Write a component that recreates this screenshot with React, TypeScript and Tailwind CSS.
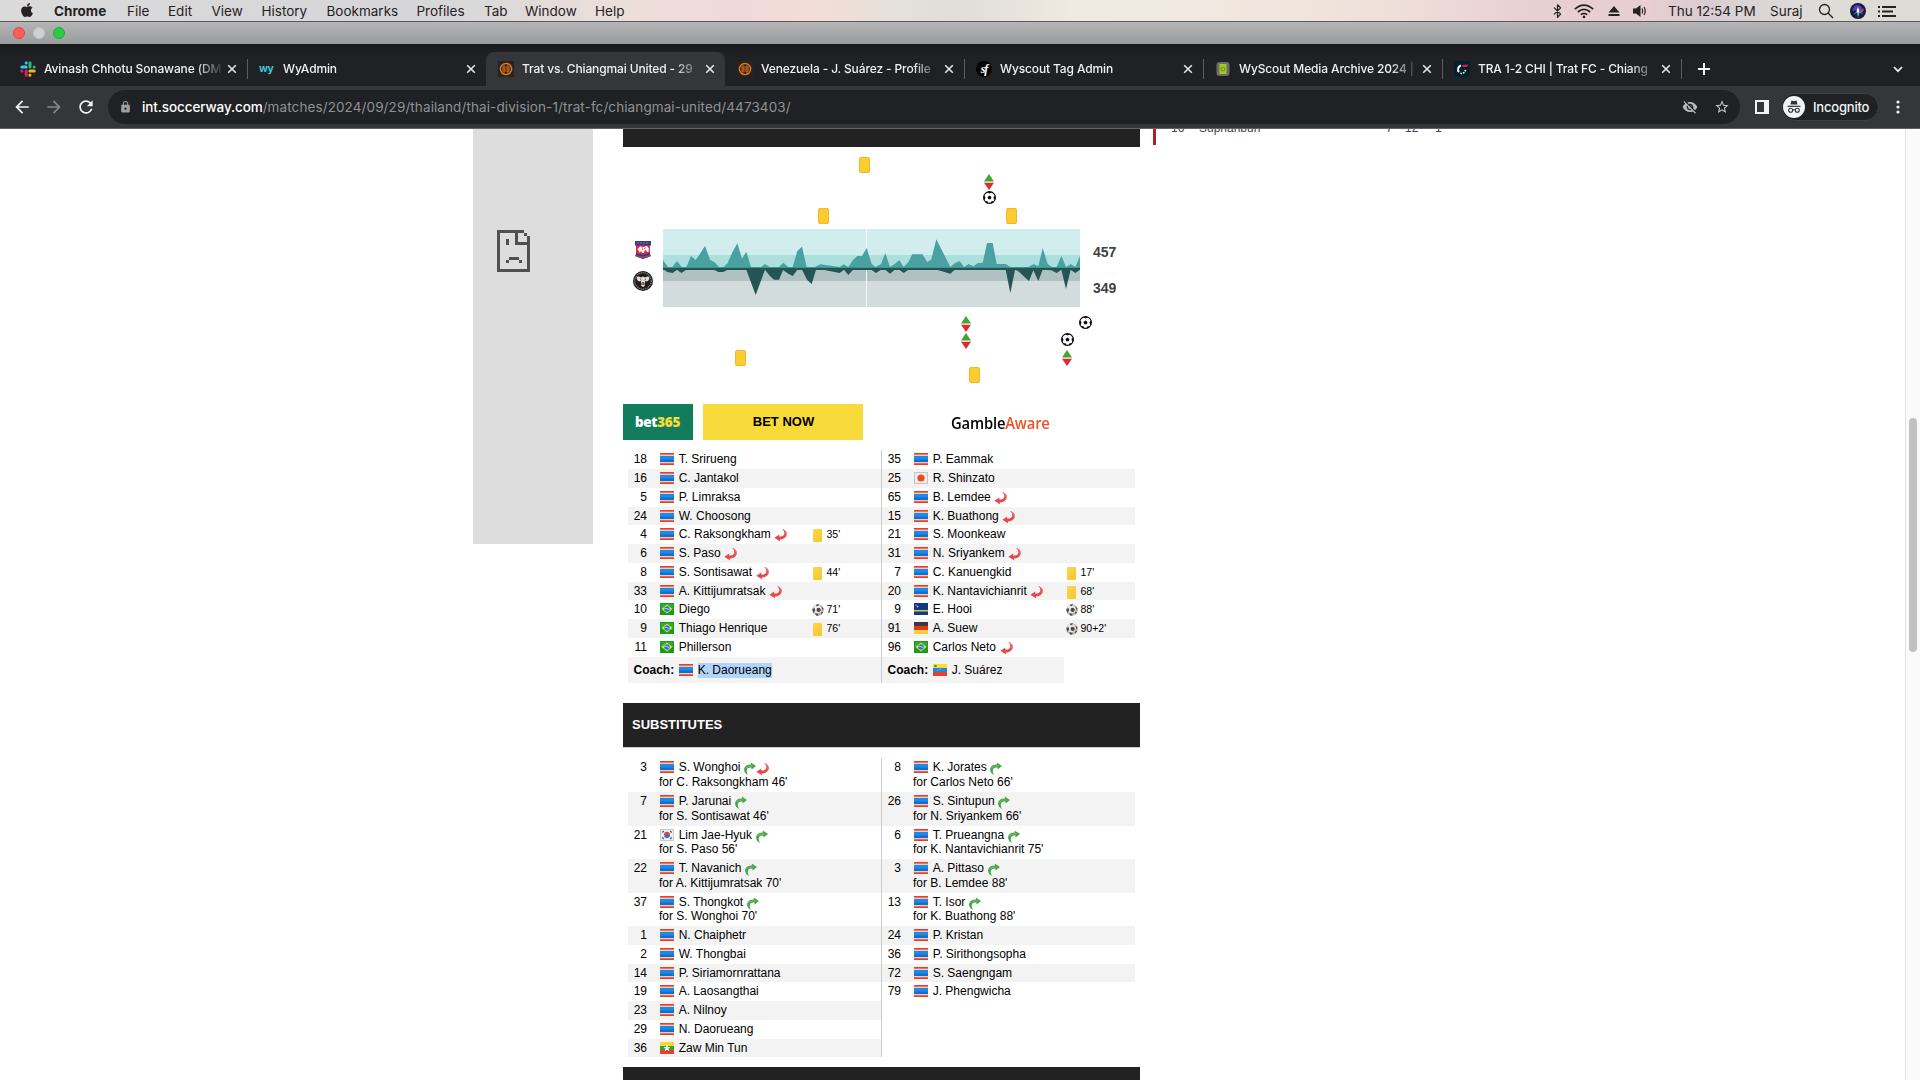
import React from "react";
import { Bluetooth } from "lucide-react";
import { MdVisibilityOff, MdStarBorder, MdLock, MdRefresh, MdArrowBack, MdArrowForward } from "react-icons/md";
import { FaApple } from "react-icons/fa";

type FlagCode = "th" | "jp" | "br" | "cw" | "de" | "ve" | "kr" | "mm";
type EventKind = "card" | "goal";

interface Player {
  n: number;
  name: string;
  flag?: FlagCode;
  out?: boolean;
  in?: boolean;
  event?: EventKind;
  minute?: string;
  sub?: string;
}

const homeLineup: Player[] = [
  { n: 18, name: "T. Srirueng" },
  { n: 16, name: "C. Jantakol" },
  { n: 5, name: "P. Limraksa" },
  { n: 24, name: "W. Choosong" },
  { n: 4, name: "C. Raksongkham", out: true, event: "card", minute: "35'" },
  { n: 6, name: "S. Paso", out: true },
  { n: 8, name: "S. Sontisawat", out: true, event: "card", minute: "44'" },
  { n: 33, name: "A. Kittijumratsak", out: true },
  { n: 10, name: "Diego", flag: "br", event: "goal", minute: "71'" },
  { n: 9, name: "Thiago Henrique", flag: "br", event: "card", minute: "76'" },
  { n: 11, name: "Phillerson", flag: "br" },
];

const awayLineup: Player[] = [
  { n: 35, name: "P. Eammak" },
  { n: 25, name: "R. Shinzato", flag: "jp" },
  { n: 65, name: "B. Lemdee", out: true },
  { n: 15, name: "K. Buathong", out: true },
  { n: 21, name: "S. Moonkeaw" },
  { n: 31, name: "N. Sriyankem", out: true },
  { n: 7, name: "C. Kanuengkid", event: "card", minute: "17'" },
  { n: 20, name: "K. Nantavichianrit", out: true, event: "card", minute: "68'" },
  { n: 9, name: "E. Hooi", flag: "cw", event: "goal", minute: "88'" },
  { n: 91, name: "A. Suew", flag: "de", event: "goal", minute: "90+2'" },
  { n: 96, name: "Carlos Neto", flag: "br", out: true },
];

const homeSubs: Player[] = [
  { n: 3, name: "S. Wonghoi", in: true, out: true, sub: "for C. Raksongkham 46'" },
  { n: 7, name: "P. Jarunai", in: true, sub: "for S. Sontisawat 46'" },
  { n: 21, name: "Lim Jae-Hyuk", flag: "kr", in: true, sub: "for S. Paso 56'" },
  { n: 22, name: "T. Navanich", in: true, sub: "for A. Kittijumratsak 70'" },
  { n: 37, name: "S. Thongkot", in: true, sub: "for S. Wonghoi 70'" },
  { n: 1, name: "N. Chaiphetr" },
  { n: 2, name: "W. Thongbai" },
  { n: 14, name: "P. Siriamornrattana" },
  { n: 19, name: "A. Laosangthai" },
  { n: 23, name: "A. Nilnoy" },
  { n: 29, name: "N. Daorueang" },
  { n: 36, name: "Zaw Min Tun", flag: "mm" },
];

const awaySubs: Player[] = [
  { n: 8, name: "K. Jorates", in: true, sub: "for Carlos Neto 66'" },
  { n: 26, name: "S. Sintupun", in: true, sub: "for N. Sriyankem 66'" },
  { n: 6, name: "T. Prueangna", in: true, sub: "for K. Nantavichianrit 75'" },
  { n: 3, name: "A. Pittaso", in: true, sub: "for B. Lemdee 88'" },
  { n: 13, name: "T. Isor", in: true, sub: "for K. Buathong 88'" },
  { n: 24, name: "P. Kristan" },
  { n: 36, name: "P. Sirithongsopha" },
  { n: 72, name: "S. Saengngam" },
  { n: 79, name: "J. Phengwicha" },
];

const lineupHeights = [19, 19, 19, 18, 19, 19, 19, 18, 19, 19, 19];
const subHeights = [34, 34, 33, 34, 33, 19, 19, 18, 19, 19, 19, 18];

function Flag({ code = "th" }: { code?: FlagCode }) {
  return (
    <svg className="block h-3 w-3.5 shrink-0" viewBox="0 0 14 12">
      {code === "th" && (
        <>
          <rect width="14" height="12" fill="#e53f28" />
          <rect y="1" width="14" height="1" fill="#f2745a" />
          <rect y="2" width="14" height="8" fill="#e2cfc9" />
          <rect y="3" width="14" height="6" fill="#1f8ae6" />
          <rect y="6.500" width="14" height="2.500" fill="#1170cf" />
          <rect y="10" width="14" height="1" fill="#f2674c" />
        </>
      )}
      {code === "jp" && (
        <>
          <rect x=".5" y=".5" width="13" height="11" fill="#ececec" stroke="#c6c6c6" />
          <circle cx="7" cy="6" r="3.600" fill="#f04a25" />
        </>
      )}
      {code === "br" && (
        <>
          <rect width="14" height="12" fill="#1d9a1d" />
          <rect x="1" y="1" width="12" height="5" fill="#2fac2a" />
          <path d="M7 1.500 12.500 6 7 10.500 1.500 6Z" fill="#d9e04a" />
          <circle cx="7" cy="6" r="2.700" fill="#2277d8" />
          <path d="M4.600 5.300q2.500-.4 4.700 1.500" stroke="#cfe6fa" strokeWidth=".8" fill="none" />
        </>
      )}
      {code === "cw" && (
        <>
          <rect width="14" height="12" fill="#12397f" />
          <rect y="7" width="14" height="1.500" fill="#dbc73c" />
          <circle cx="2" cy="2" r=".6" fill="#fff" />
          <circle cx="3.600" cy="3.600" r=".8" fill="#d5dff0" />
        </>
      )}
      {code === "de" && (
        <>
          <rect width="14" height="4" fill="#3a3a3a" />
          <rect y="4" width="14" height="4" fill="#e8321d" />
          <rect y="8" width="14" height="4" fill="#f6cf3a" />
        </>
      )}
      {code === "ve" && (
        <>
          <rect width="14" height="4" fill="#f7de37" />
          <rect y="4" width="14" height="4" fill="#2585dc" />
          <rect y="8" width="14" height="4" fill="#ea4029" />
          <circle cx="2.500" cy="2" r="1.300" fill="#5f8a3c" />
          <path d="M4.500 6.500q2.500-2 5 0" stroke="#a9cdf0" strokeWidth=".7" strokeDasharray="1 .6" fill="none" />
        </>
      )}
      {code === "kr" && (
        <>
          <rect x=".5" y=".5" width="13" height="11" fill="#f0f0f0" stroke="#cbcbcb" />
          <path d="M4 6a3 3 0 0 1 6-.6L7 6.500Z" fill="#e5432c" />
          <path d="M10 5.600a3 3 0 0 1-6 .8L7 5.500Z" fill="#2a6fd0" />
          <path d="M2.300 3.500 3.800 2M10.200 2l1.500 1.500M2.300 8.500 3.800 10M10.200 10l1.500-1.500" stroke="#555" strokeWidth="1.300" />
        </>
      )}
      {code === "mm" && (
        <>
          <rect width="14" height="4" fill="#f7d734" />
          <rect y="4" width="14" height="4" fill="#36a13a" />
          <rect y="8" width="14" height="4" fill="#ea4029" />
          <path d="M7 2.500 8 5h2.500l-2 1.600.8 2.600L7 7.700 4.700 9.200l.8-2.600-2-1.600H6Z" fill="#fff" />
        </>
      )}
    </svg>
  );
}

function OutArrow() {
  return (
    <svg className="block h-3.5 w-3.5 shrink-0" viewBox="0 0 14 14">
      <path d="M8 1C12 1.500 13.600 5 12.500 7.700 11.400 10.200 8.500 11.600 5.700 11.500L6.200 13.500.4 9.700 5.300 6.500 5.200 8.600C7.800 8.700 9.600 8.100 10.200 6.200 10.800 4.300 9.800 2.300 8 1Z" fill="#e5494b" />
      <path d="M9.200 1.800C12 3 13 5.500 11.700 7.700" stroke="#f0908f" strokeWidth=".8" fill="none" />
    </svg>
  );
}

function InArrow() {
  return (
    <svg className="block h-3.5 w-3 shrink-0" viewBox="0 0 12 14">
      <path d="M4.300 13.300C.2 11.400-.9 7.500.9 5 2.200 3 4.400 2.300 7 2.500L6.800.5 12 4 7.600 7.600 7.400 5.600C5 5.300 3.300 6 2.900 7.900c-.4 1.900.2 3.600 1.400 5.400Z" fill="#46a54c" />
      <path d="M1.800 6.200C3 4.300 5 3.800 8.500 4" stroke="#7fc268" strokeWidth=".9" fill="none" />
    </svg>
  );
}

function SmallBall() {
  return (
    <svg className="block size-3" viewBox="0 0 12 12">
      <circle cx="6" cy="6" r="5.800" fill="#b4b4b4" />
      <circle cx="5.300" cy="5" r="4.300" fill="#eaeaea" />
      <path d="M4.800 4.300 7.600 3.800 9 6 7.200 8.300 4.700 7.200ZM.3 5l2.200-1L3.200 6.500 1.500 9ZM4 .6 7 .3 6.200 2 4.500 2.300ZM9.300 2.500l2.200 2L10.800 6.500ZM3.300 9.300 6 9.700 6.500 11.800 4.200 11.500ZM9 8.500l2.300-.8-1.800 3Z" fill="#4a4a4a" />
    </svg>
  );
}

function MatchBall() {
  return (
    <svg className="block size-[13px]" viewBox="0 0 13 13">
      <circle cx="6.500" cy="6.500" r="5.900" fill="#fff" stroke="#0c0c0c" strokeWidth="1.100" />
      <path d="M6.500 4.500 8.500 5.900 7.700 8.200H5.300L4.500 5.900ZM3.800 1 6.500 2.500 9.200 1ZM.6 4.200 2.500 5.900 2 8.200.8 9.200ZM12.400 4.200 10.500 5.900l.5 2.300 1.200 1ZM2.200 10l2.700.6.400 1.900L3 12ZM10.800 10l-2.700.6-.4 1.900 2.300-.5Z" fill="#0c0c0c" />
    </svg>
  );
}

function SwapMark() {
  return (
    <svg className="block h-4 w-2.5" viewBox="0 0 10 16">
      <path d="M5 0 10 7.500H0Z" fill="#43a52f" />
      <path d="M0 8.700H10L5 16Z" fill="#de2a30" />
    </svg>
  );
}

function PlayerRow({ p, h, striped }: { p: Player; h: number; striped: boolean }) {
  return (
    <div className={"flex w-[253px] " + (striped ? "bg-[#f3f3f3]" : "bg-white")} style={{ height: h }}>
      <div className="w-[19px] shrink-0 pt-px text-right leading-4">{p.n}</div>
      <div className="w-[163px] shrink-0 pl-3">
        <div className="flex h-[18px] items-center pl-px">
          <Flag code={p.flag} />
          <span className="ml-[4.700px] whitespace-nowrap leading-4">{p.name}</span>
          {p.in && (
            <span className="ml-[3.500px] pt-[3px]">
              <InArrow />
            </span>
          )}
          {p.out && (
            <span className={p.in ? "pt-1" : "ml-[3.500px] pt-0.5"}>
              <OutArrow />
            </span>
          )}
        </div>
        {p.sub && (
          <div className={"-mt-0.5 whitespace-nowrap " + (h === 34 ? "leading-[17px]" : "leading-[15px]")}>{p.sub}</div>
        )}
      </div>
      {p.event && (
        <div className="flex h-[18px] items-center text-[10.500px]">
          <div className="flex w-[15px] justify-center pt-0.5">
            {p.event === "card" ? (
              <div className="h-[13px] w-[9px] rounded-[1px] bg-[linear-gradient(135deg,#fdd54e,#f9c62a)]" />
            ) : (
              <SmallBall />
            )}
          </div>
          <span className="ml-[1.500px] leading-4">{p.minute}</span>
        </div>
      )}
    </div>
  );
}

function PlayerColumn({ rows, heights, children }: { rows: Player[]; heights: number[]; children?: React.ReactNode }) {
  return (
    <div className="w-[253px]">
      {rows.map((p, i) => (
        <PlayerRow key={i} p={p} h={heights[i]} striped={i % 2 === 1} />
      ))}
      {children}
    </div>
  );
}

const upper =
  "0,117 0,94 15,114 28,114 42,96 56,114 70,114 84,81 98,93 112,73 126,51 141,92 155,100 168,114 182,114 194,102 209,68 223,43 237,89 250,68 264,114 294,114 306,105 320,114 348,114 361,101 376,114 389,114 403,66 417,53 431,114 455,114 472,106 530,114 542,106 556,114 570,93 583,81 597,81 611,57 626,105 638,114 654,105 667,72 681,114 695,105 709,93 722,114 736,99 748,76 778,76 793,99 805,91 820,31 862,114 876,102 890,96 903,114 917,105 931,112 945,102 959,101 972,42 989,42 1001,105 1028,105 1042,114 1096,114 1112,105 1126,112 1139,57 1154,105 1167,114 1181,114 1195,81 1209,114 1223,105 1237,114 1251,81 1251,117";
const lower =
  "0,120 13,129 29,132 42,122 55,132 70,122 153,122 166,129 181,129 194,122 250,122 278,198 306,122 320,140 333,152 348,152 360,123 376,134 389,141 403,122 417,122 432,152 446,165 459,122 480,122 530,132 543,122 556,138 570,122 625,122 639,132 654,122 667,122 681,134 695,122 709,122 722,132 736,122 822,122 862,134 875,122 1028,122 1042,192 1056,122 1065,126 1098,156 1111,124 1126,156 1139,122 1165,124 1181,132 1195,122 1209,180 1223,122 1237,132 1251,122 1251,117 0,117";

function Momentum() {
  return (
    <svg className="block h-[78px] w-[417px]" viewBox="0 0 1251 234">
      <rect width="1251" height="78" fill="#d1eded" />
      <rect y="78" width="1251" height="42" fill="#abe0df" />
      <rect y="120" width="1251" height="36" fill="#afc1c1" />
      <rect y="156" width="1251" height="78" fill="#d3dcdd" />
      <rect x="609" width="3" height="234" fill="#f4fafa" />
      <polygon points={upper} fill="#49a2a0" />
      <polygon points={lower} fill="#225553" />
      <rect y="116.500" width="1251" height="6.500" fill="#225553" />
    </svg>
  );
}

const marks: { kind: "card" | "swap" | "ball"; pos: string }[] = [
  { kind: "card", pos: "left-[236px] top-[10px]" },
  { kind: "card", pos: "left-[195px] top-[61px]" },
  { kind: "card", pos: "left-[383px] top-[61px]" },
  { kind: "card", pos: "left-[112px] top-[203px]" },
  { kind: "card", pos: "left-[346px] top-[220px]" },
  { kind: "swap", pos: "left-[361px] top-[27px]" },
  { kind: "swap", pos: "left-[338px] top-[169px]" },
  { kind: "swap", pos: "left-[338px] top-[186px]" },
  { kind: "swap", pos: "left-[439px] top-[203px]" },
  { kind: "ball", pos: "left-[360px] top-[44px]" },
  { kind: "ball", pos: "left-[456px] top-[169px]" },
  { kind: "ball", pos: "left-[438px] top-[186px]" },
];

function MatchChart() {
  return (
    <div className="relative flex h-[257px] pt-[82px]">
      <div className="flex w-10 shrink-0 flex-col items-center pt-3">
        <svg className="block h-[18px] w-4" viewBox="0 0 16 18">
          <path d="M0 0H16V4L15 5V13L16 15 11 17 8 18 5 17 0 15 1 13V5L0 4Z" fill="#34407f" />
          <path d="M1 4.500H15V12L8 13.500 1 12Z" fill="#ee2440" />
          <path d="M2.500 8 5 5.500 8.500 6 12 5 14 7.500 13.500 11 12 11 11 9 9.500 9.500 9 12H7L6.500 10 4.500 11.500 3.500 9.500Z" fill="#fff" />
          <path d="M7 6 8 9M11 6.500 9 8" stroke="#ee2440" strokeWidth=".7" />
          <path d="M2 2H14" stroke="#a6607f" strokeDasharray="2 1" />
          <path d="M1 14.800Q8 17.500 15 14.800" stroke="#a83a68" strokeWidth="1.500" fill="none" />
        </svg>
        <svg className="mt-3 block size-5" viewBox="0 0 20 20">
          <circle cx="10" cy="10" r="10" fill="#1d1b1b" />
          <circle cx="10" cy="10" r="8.200" fill="none" stroke="#8b8b8b" strokeWidth="1.200" strokeDasharray="1.200 .8" />
          <circle cx="10" cy="10" r="6.700" fill="#2a1614" />
          <path d="M3.700 6Q5.500 4.800 8 6.500L10 5.500 12 6.500Q14.500 4.800 16.300 6 16.500 9.500 14 10.500L12.200 10 11.500 13 11.800 15 10 16 8.200 15 8.500 13 7.800 10 6 10.500Q3.500 9.500 3.700 6Z" fill="#dedede" />
          <path d="M7.300 7.500 8.200 9.500M12.700 7.500 11.800 9.500M9.500 11v3M10.500 11v3" stroke="#333" strokeWidth=".7" />
        </svg>
      </div>
      <Momentum />
      <div className="flex flex-col pl-[13px] pt-[13px] text-sm font-bold text-[#414141]">
        <span className="leading-5">457</span>
        <span className="mt-4 leading-5">349</span>
      </div>
      {marks.map((m, i) => (
        <div key={i} className={"absolute " + m.pos}>
          {m.kind === "card" && <div className="h-4 w-[11px] rounded-[2px] border border-[#f9b32f] bg-[#fbce2f]" />}
          {m.kind === "swap" && <SwapMark />}
          {m.kind === "ball" && <MatchBall />}
        </div>
      ))}
    </div>
  );
}

const menus = [
  { t: "File", w: "w-[41px]" },
  { t: "Edit", w: "w-[43.500px]" },
  { t: "View", w: "w-[50px]" },
  { t: "History", w: "w-[65px]" },
  { t: "Bookmarks", w: "w-[90px]" },
  { t: "Profiles", w: "w-[67.500px]" },
  { t: "Tab", w: "w-[41px]" },
  { t: "Window", w: "w-[70px]" },
  { t: "Help", w: "w-[40px]" },
];

function MenuBar() {
  return (
    <div className="flex h-[22px] shrink-0 items-center border-b border-[#5f5a5a] bg-[linear-gradient(90deg,#dadada_0%,#d6d6d8_22%,#dedada_27%,#ecdfda_32%,#f0d9d9_39%,#f4ddd6_42%,#e4e0da_47%,#e0ded7_50%,#efeae2_56%,#f1e9e1_62%,#efe0da_72%,#e8cfd2_80%,#e6ced1_86%,#d8cdd2_89%,#dedcd8_94%,#dcdcd4_100%)] pt-px text-[13.500px] text-[#262223]">
      <FaApple className="mb-0.5 ml-[19px] size-4" />
      <span className="ml-[19px] w-[73px] font-bold">Chrome</span>
      {menus.map((m) => (
        <span key={m.t} className={"shrink-0 " + m.w}>
          {m.t}
        </span>
      ))}
      <div className="ml-auto flex items-center whitespace-nowrap">
        <Bluetooth className="h-4 w-[15px]" strokeWidth={2} />
        <svg className="ml-[9px] h-[15px] w-5" viewBox="0 0 20 15" fill="none" stroke="#262223" strokeWidth="1.700">
          <path d="M.8 5.200Q10-3 19.200 5.200M3.800 8Q10 2.600 16.200 8M6.700 10.700Q10 8 13.300 10.700" />
          <circle cx="10" cy="12.900" r="1.300" fill="#262223" stroke="none" />
        </svg>
        <svg className="ml-3.5 h-3 w-3" viewBox="0 0 12 12" fill="#262223">
          <path d="M6 1 11.500 7.500H.5ZM.5 9H11.500V11H.5Z" />
        </svg>
        <svg className="ml-3 h-3.5 w-4" viewBox="0 0 16 14" fill="#262223">
          <path d="M1 4.500H4L8.500 1V13L4 9.500H1Z" />
          <path d="M10 4.500Q11.500 7 10 9.500M12 3Q14.500 7 12 11" fill="none" stroke="#262223" strokeWidth="1.200" />
        </svg>
        <span className="ml-5 w-[102px]">Thu 12:54 PM</span>
        <span className="w-[48px]">Suraj</span>
        <svg className="h-4 w-4" viewBox="0 0 16 16" fill="none" stroke="#262223" strokeWidth="1.300">
          <circle cx="6.500" cy="6.500" r="5" />
          <path d="M10.300 10.300 15 15" />
        </svg>
        <svg className="ml-4 size-4" viewBox="0 0 16 16">
          <circle cx="8" cy="8" r="8" fill="#1b1a3c" />
          <path d="M2 8Q4 1 8 2T14 8L8 7Z" fill="#5a3fc0" />
          <path d="M8 7 3 12 7 9.500 8 15 9.500 9.500 13.500 11.500Z" fill="#4cc5da" />
          <path d="M8 4 9.500 8 8 10 6.500 8Z" fill="#fff" />
          <path d="M9 8 14 6 12 10Z" fill="#d43a86" />
        </svg>
        <svg className="ml-3 mr-6 h-[11px] w-[18px]" viewBox="0 0 18 11" fill="#262223">
          <path d="M0 0h2v2H0ZM4 0h14v2H4ZM0 4.500h2v2H0ZM4 4.500h11v2H4ZM0 9h2v2H0ZM4 9h14v2H4Z" />
        </svg>
      </div>
    </div>
  );
}

function SoccerwayIcon() {
  return (
    <svg className="size-4 shrink-0" viewBox="0 0 16 16">
      <rect width="16" height="16" fill="#29231d" />
      <circle cx="8" cy="8" r="5.600" fill="none" stroke="#dd7623" strokeWidth="1.500" />
      <path d="M4 6H12M4 8H12M4 10H12M6 3.500V12.500M10 3.500V12.500" stroke="#c96a20" strokeWidth="1" />
    </svg>
  );
}

function SlackIcon() {
  return (
    <svg className="size-4 shrink-0" viewBox="0 0 16 16" strokeWidth="3" strokeLinecap="round">
      <path d="M1.800 6H6.200M6.200 1.800V2" stroke="#36c5f0" />
      <path d="M10 1.800V6M14.200 6H14.100" stroke="#2eb67d" />
      <path d="M9.900 10H14.200M9.900 14.200V14.100" stroke="#ecb22e" />
      <path d="M6.200 10V14.200M1.800 10H1.900" stroke="#e01e5a" />
    </svg>
  );
}

const tabs: { title: string; icon: React.ReactNode; active?: boolean; sep?: boolean }[] = [
  { title: "Avinash Chhotu Sonawane (DM", icon: <SlackIcon />, sep: true },
  { title: "WyAdmin", icon: <span className="w-4 text-[10.500px] font-bold tracking-[-0.5px] text-[#3fc6dc]">wy</span> },
  { title: "Trat vs. Chiangmai United - 29", icon: <SoccerwayIcon />, active: true },
  { title: "Venezuela - J. Suárez - Profile", icon: <SoccerwayIcon />, sep: true },
  {
    title: "Wyscout Tag Admin",
    icon: (
      <span className="flex size-4 items-center justify-center rounded-full bg-black font-[Liberation_Serif] text-[12px] font-bold italic leading-none tracking-[-1px] text-white">
        sf
      </span>
    ),
    sep: true,
  },
  {
    title: "WyScout Media Archive 2024 |",
    icon: (
      <svg className="size-4 shrink-0" viewBox="0 0 16 16">
        <rect x="1.500" y="1" width="13" height="14" rx="3" fill="#6b6d6c" />
        <rect x="4.500" y="3" width="7" height="10" fill="#a3c81e" />
        <circle cx="8" cy="8" r="2" fill="none" stroke="#6d8c10" />
      </svg>
    ),
    sep: true,
  },
  {
    title: "TRA 1-2 CHI | Trat FC - Chiang",
    icon: (
      <svg className="size-4 shrink-0" viewBox="0 0 16 16">
        <rect width="16" height="16" rx="3" fill="#04202b" />
        <path d="M7 4.500A4 4 0 0 0 5 11" stroke="#fff" strokeWidth="2" fill="none" />
        <path d="M6.500 12.300A4 4 0 0 0 11.500 8.500" stroke="#fff" strokeWidth="1.500" strokeDasharray="1.500 1" fill="none" />
        <path d="M8 4 14.500 3.500 12.500 6H9Z" fill="#e5194c" />
      </svg>
    ),
    sep: true,
  },
];

function TabStrip() {
  return (
    <div className="flex h-[42px] shrink-0 bg-[linear-gradient(#18191b,#202124_10px)] pl-2 pt-2">
      {tabs.map((t, i) => (
        <div
          key={i}
          className={
            "relative flex h-[34px] w-[239px] shrink-0 items-center pl-3 text-[12px] font-medium tracking-[-0.13px] text-[#f0f1f3] " +
            (t.active ? "rounded-t-lg bg-[#35363a]" : "")
          }
        >
          {t.icon}
          <span className="ml-2 w-[178px] whitespace-nowrap [mask-image:linear-gradient(90deg,#000_152px,transparent_180px)]">
            {t.title}
          </span>
          <svg className="ml-[5px] size-2.5" viewBox="0 0 10 10" stroke="#e4e6e9" strokeWidth="1.600">
            <path d="M1.200 1.200 8.800 8.800M8.800 1.200 1.200 8.800" />
          </svg>
          {t.sep && <div className="absolute right-[-1px] top-[7px] h-5 w-px bg-[#5b5d61]" />}
        </div>
      ))}
      <div className="flex h-[34px] flex-1 items-center justify-between pl-[17px] pr-[17px]">
        <svg className="size-3" viewBox="0 0 12 12" stroke="#f1f3f4" strokeWidth="2">
          <path d="M6 0V12M0 6H12" />
        </svg>
        <svg className="size-2.5" viewBox="0 0 10 10" fill="none" stroke="#e8eaed" strokeWidth="1.800">
          <path d="M1 3 5 7.200 9 3" />
        </svg>
      </div>
    </div>
  );
}

function Toolbar() {
  return (
    <div className="flex h-[43px] shrink-0 items-start border-b border-[#606164] bg-[#35363a] pt-1 text-[13.500px]">
      <div className="flex h-[34px] w-[108px] shrink-0 items-center pl-3">
        <MdArrowBack className="size-5 text-[#f1f3f4]" />
        <MdArrowForward className="ml-3 size-5 text-[#85878b]" />
        <MdRefresh className="ml-3 size-5 text-[#f1f3f4]" />
      </div>
      <div className="flex h-[34px] w-[1632px] shrink-0 items-center rounded-full bg-[#202124] pl-[11px]">
        <MdLock className="h-3.5 w-[13px] text-[#9aa0a6]" />
        <span className="ml-2.5 whitespace-nowrap tracking-[0.1px] text-[#8f9297]">
          <span className="font-medium tracking-[-0.1px] text-white">int.soccerway.com</span>/matches/2024/09/29/thailand/thai-division-1/trat-fc/chiangmai-united/4473403/
        </span>
        <MdVisibilityOff className="ml-auto size-4 text-[#b5b8bc]" />
        <MdStarBorder className="ml-4 mr-2.5 size-4 text-[#c3c6ca]" />
      </div>
      <div className="flex h-[34px] items-center">
        <div className="ml-[15px] h-3.5 w-3.5 border-2 border-r-[5px] border-[#f1f3f4]" />
        <div className="ml-3 flex h-7 w-[98px] items-center rounded-full border border-[#3f4044] bg-[#202124] pl-px text-[13px] font-medium tracking-[-0.2px] text-[#f1f3f4]">
          <svg className="size-[22px] shrink-0" viewBox="0 0 22 22">
            <circle cx="11" cy="11" r="11" fill="#f1f3f4" />
            <path d="M7.500 8.500 8.500 4.500 11 5.200 13.500 4.500 14.500 8.500Z" fill="#303134" />
            <path d="M4.500 10.300H17.500" stroke="#303134" strokeWidth="1.200" />
            <circle cx="7.700" cy="14.300" r="2" fill="none" stroke="#303134" strokeWidth="1.100" />
            <circle cx="14.300" cy="14.300" r="2" fill="none" stroke="#303134" strokeWidth="1.100" />
            <path d="M9.700 14Q11 13.300 12.300 14" fill="none" stroke="#303134" />
          </svg>
          <span className="ml-2 pt-px">Incognito</span>
        </div>
        <svg className="ml-[17px] h-3.5 w-1" viewBox="0 0 4 14" fill="#f1f3f4">
          <circle cx="2" cy="2" r="1.600" />
          <circle cx="2" cy="7" r="1.600" />
          <circle cx="2" cy="12" r="1.600" />
        </svg>
      </div>
    </div>
  );
}

function SadPage() {
  return (
    <svg className="block h-[42px] w-[33px]" viewBox="0 0 11 14" shapeRendering="crispEdges" fill="#505050">
      <path d="M0 0H9V1H0ZM0 1H1V14H0ZM1 13H11V14H1ZM10 2H11V13H10ZM9 1H10V2H9ZM6 1H7V5H6ZM7 4H10V5H7ZM3 3H4V5H3ZM4 9H7.300V10H4ZM3 10H4V11H3ZM7.300 10H8.300V11H7.300Z" />
    </svg>
  );
}

function Coach({ flag, name, selected, narrow }: { flag: FlagCode; name: string; selected?: boolean; narrow?: boolean }) {
  return (
    <div className={"flex h-[26px] items-center bg-[#f3f3f3] pl-[5.500px] " + (narrow ? "w-[182px]" : "w-full")}>
      <b className="w-[45.500px]">Coach:</b>
      <Flag code={flag} />
      <span className={"ml-[4.700px] leading-[15px] " + (selected ? "bg-[#b2d3fa]" : "")}>{name}</span>
    </div>
  );
}

export default function App() {
  return (
    <div className="flex h-[1080px] w-[1920px] flex-col overflow-hidden bg-white font-[Inter,sans-serif]">
      <MenuBar />
      <div className="flex h-[22px] shrink-0 items-center gap-2 bg-[linear-gradient(#b5b5b7,#9a9b9c)] pl-[13px]">
        <div className="size-3 rounded-full border border-[#e2463f] bg-[#ff5d55]" />
        <div className="size-3 rounded-full border border-[#c2c2c2] bg-[#d0d0d0]" />
        <div className="size-3 rounded-full border border-[#1fae33] bg-[#2fc944]" />
      </div>
      <TabStrip />
      <Toolbar />
      <div className="flex h-[951px] font-[Liberation_Sans,Arial,sans-serif] text-xs text-black">
        <div className="ml-[473px] h-[415px] w-[120px] shrink-0 bg-[#ddd] pl-6 pt-[101px]">
          <SadPage />
        </div>
        <div className="ml-[30px] w-[517px] shrink-0">
          <div className="h-[18px] bg-[#222]" />
          <MatchChart />
          <div className="flex h-9">
            <div className="flex w-[70px] items-center justify-center bg-[#127c5b] pb-px pr-px font-['Open_Sans',sans-serif] text-[13.500px] font-extrabold tracking-[-0.3px] text-white">
              bet<span className="text-[#f6dc3c]">365</span>
            </div>
            <div className="ml-2.5 flex w-40 items-center justify-center bg-[#f8db3a] pb-px pl-px text-[13px] font-bold">BET NOW</div>
            <div className="ml-[88px] flex items-center pt-[3px] font-['Open_Sans',sans-serif] text-[17px] font-semibold">
              <span className="inline-block origin-left scale-x-[0.87] whitespace-nowrap tracking-[-0.2px]">
                Gamble<span className="text-[#ee5423]">Aware</span>
              </span>
            </div>
          </div>
          <div className="ml-[5px] mt-2.5 flex h-[233px]">
            <PlayerColumn rows={homeLineup} heights={lineupHeights}>
              <Coach flag="th" name="K. Daorueang" selected />
            </PlayerColumn>
            <div className="w-px bg-[#ccc]" />
            <PlayerColumn rows={awayLineup} heights={lineupHeights}>
              <Coach flag="ve" name="J. Suárez" narrow />
            </PlayerColumn>
          </div>
          <div className="mt-5 flex h-[45px] items-center border-b border-[#ccc] bg-[#222] pl-[9px] text-[13px] font-bold text-white">
            SUBSTITUTES
          </div>
          <div className="ml-[5px] mt-2.5 flex h-[299px]">
            <PlayerColumn rows={homeSubs} heights={subHeights} />
            <div className="w-px bg-[#ccc]" />
            <PlayerColumn rows={awaySubs} heights={subHeights} />
          </div>
          <div className="mt-2.5 h-[13px] bg-[#222]" />
        </div>
        <div className="ml-[13px] h-4 w-[300px] overflow-hidden border-l-[3px] border-[#b01f24] text-[#444]">
          <div className="-mt-[9px] flex h-[15px] items-end pl-[15px] leading-[14px]">
            <span className="w-7">16</span>
            <span className="w-[187px]">Suphanburi</span>
            <span className="w-[15px]">7</span>
            <span className="w-[34px]">-12</span>
            <span>1</span>
          </div>
        </div>
        <div className="ml-auto flex w-[15px] justify-center border-l border-[#e4e4e4] bg-[#fafafa] pt-[289px]">
          <div className="h-[234px] w-2 rounded-full bg-[#c1c1c1]" />
        </div>
      </div>
    </div>
  );
}
